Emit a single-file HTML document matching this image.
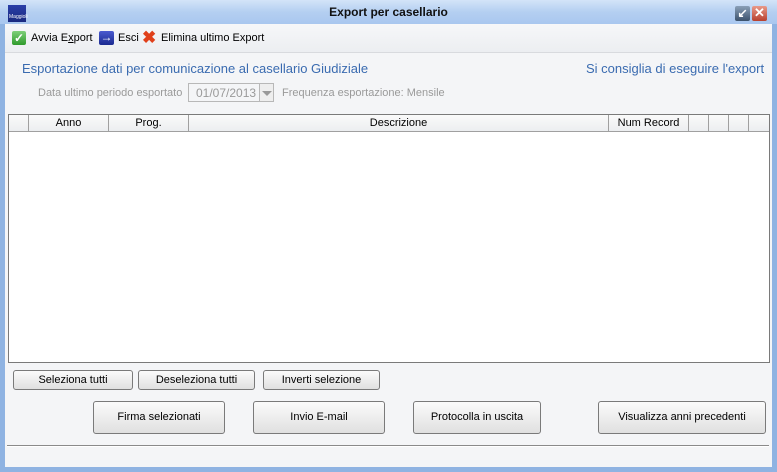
<!DOCTYPE html>
<html><head><meta charset="utf-8"><style>
*{margin:0;padding:0;box-sizing:border-box}
body{width:777px;height:472px;overflow:hidden;font-family:"Liberation Sans",sans-serif;font-size:11px;color:#000;background:#8fb3e2;position:relative}
.abs{position:absolute}
#title{left:0;top:0;width:777px;height:24px;background:linear-gradient(#d3e4f8,#b4cff1 50%,#a9c7ef);}
#title .t{left:0;width:777px;top:5px;text-align:center;font-weight:bold;font-size:12px;color:#111}
#client{left:5px;top:24px;width:767px;height:443px;background:#f4f5f7}
.btn{position:absolute;border:1px solid #7a7a7a;border-radius:3px;background:linear-gradient(#fbfbfb,#ececec 55%,#e0e0e0);text-align:center;font-size:11px;color:#000}
.hdr{position:absolute;top:0;height:17px;border-right:1px solid #a0a0a0;text-align:center;line-height:16px;font-size:11px}
</style></head><body>
<div id="title" class="abs">
 <div class="abs" style="left:8px;top:5px;width:18px;height:17px;background:linear-gradient(#2a3fa8,#1a2a80)"><div style="position:absolute;bottom:2px;left:1px;font-size:5px;color:#fff">Maggioli</div></div>
 <div class="abs t">Export per casellario</div>
 <div class="abs" style="left:735px;top:6px;width:15px;height:15px;background:linear-gradient(#8aa0b8,#3c526c);border-radius:2px;color:#fff;font-size:12px;line-height:14px;text-align:center;font-weight:bold">&#8601;</div>
 <div class="abs" style="left:752px;top:6px;width:15px;height:15px;background:linear-gradient(#e89a8a,#b8402e);border-radius:2px;color:#fff;font-size:13px;line-height:14px;text-align:center;font-weight:bold">&#10005;</div>
</div>
<div id="client" class="abs">
 <div class="abs" style="left:0;top:0;width:767px;height:29px;background:linear-gradient(#f6f7f9,#eceef1);border-bottom:1px solid #d8dade"></div>
 <div class="abs" style="left:7px;top:7px;width:14px;height:14px;background:linear-gradient(#7fd07a,#2f9a2c);border-radius:2px;color:#fff;font-size:12px;line-height:14px;text-align:center;font-weight:bold">&#10003;</div>
 <div class="abs" style="left:26px;top:8px;font-size:11px">Avvia E<u>x</u>port</div>
 <div class="abs" style="left:94px;top:7px;width:15px;height:14px;background:linear-gradient(#4a5ad0,#1a2a90);border-radius:2px;color:#fff;font-size:12px;line-height:13px;text-align:center;font-weight:bold">&#8594;</div>
 <div class="abs" style="left:113px;top:8px">Esci</div>
 <div class="abs" style="left:137px;top:5px;color:#e0401a;font-size:17px;font-weight:bold;line-height:17px">&#10006;</div>
 <div class="abs" style="left:156px;top:8px">Elimina ultimo Export</div>
 <div class="abs" style="left:17px;top:37px;font-size:13px;color:#3a6bb0">Esportazione dati per comunicazione al casellario Giudiziale</div>
 <div class="abs" style="left:581px;top:37px;font-size:13px;color:#3a6bb0">Si consiglia di eseguire l'export</div>
 <div class="abs" style="left:33px;top:63px;color:#9a9a9a">Data ultimo periodo esportato</div>
 <div class="abs" style="left:183px;top:59px;width:76px;height:19px;border:1px solid #b8b8b8;background:#f4f5f7;color:#9a9a9a;padding:2px 0 0 7px;font-size:12px">01/07/2013</div>
 <div class="abs" style="left:254px;top:59px;width:15px;height:19px;border:1px solid #b8b8b8;background:#eee"><div style="position:absolute;left:2px;top:7px;border-left:5px solid transparent;border-right:5px solid transparent;border-top:5px solid #999"></div></div>
 <div class="abs" style="left:277px;top:63px;color:#9a9a9a">Frequenza esportazione: Mensile</div>
 <div class="abs" style="left:3px;top:90px;width:762px;height:249px;border:1px solid #7a7a7a;background:#fff">
  <div class="abs" style="left:0;top:0;width:760px;height:17px;background:linear-gradient(#fafafa,#eceef0);border-bottom:1px solid #a0a0a0"></div>
  <div class="hdr" style="left:0;width:20px"></div>
  <div class="hdr" style="left:20px;width:80px">Anno</div>
  <div class="hdr" style="left:100px;width:80px">Prog.</div>
  <div class="hdr" style="left:180px;width:420px">Descrizione</div>
  <div class="hdr" style="left:600px;width:80px">Num Record</div>
  <div class="hdr" style="left:680px;width:20px"></div>
  <div class="hdr" style="left:700px;width:20px"></div>
  <div class="hdr" style="left:720px;width:20px"></div>
 </div>
 <div class="btn" style="left:8px;top:346px;width:120px;height:20px;line-height:18px">Seleziona tutti</div>
 <div class="btn" style="left:133px;top:346px;width:117px;height:20px;line-height:18px">Deseleziona tutti</div>
 <div class="btn" style="left:258px;top:346px;width:117px;height:20px;line-height:18px">Inverti selezione</div>
 <div class="btn" style="left:88px;top:377px;width:132px;height:33px;line-height:31px">Firma selezionati</div>
 <div class="btn" style="left:248px;top:377px;width:132px;height:33px;line-height:31px">Invio E-mail</div>
 <div class="btn" style="left:408px;top:377px;width:128px;height:33px;line-height:31px">Protocolla in uscita</div>
 <div class="btn" style="left:593px;top:377px;width:168px;height:33px;line-height:31px">Visualizza anni precedenti</div>
 <div class="abs" style="left:2px;top:421px;width:762px;height:1px;background:#8a8a8a"></div>
 <div class="abs" style="left:2px;top:422px;width:762px;height:1px;background:#fff"></div>
</div>
</body></html>
